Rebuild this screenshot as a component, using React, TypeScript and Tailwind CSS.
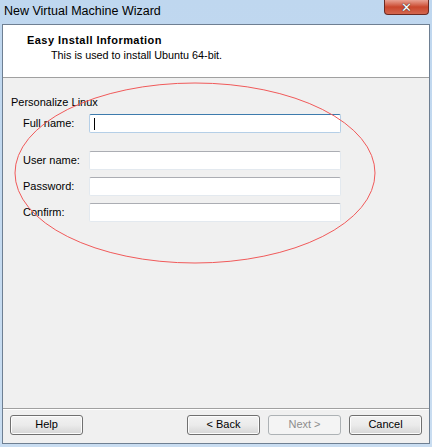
import React from 'react';

const font = { fontFamily: '"Liberation Sans", Arial, sans-serif' };

const Field: React.FC<{ label: string; focused?: boolean }> = ({ label, focused }) => (
    <div className="flex items-center h-[19px]">
        <span className="w-[66px] text-[11px] text-black">{label}</span>
        <div
            className={
                focused
                    ? 'relative w-[252px] h-[19px] bg-white rounded-[2px] border border-[#b5cfe7] border-t-[#3d7bad]'
                    : 'relative w-[252px] h-[19px] bg-white rounded-[2px] border border-[#e3e9ef] border-t-[#abadb3]'
            }
        >
            {focused && <span className="absolute left-[4px] top-[3px] w-px h-[12px] bg-black" />}
        </div>
    </div>
);

const Btn: React.FC<{ label: string; disabled?: boolean }> = ({ label, disabled }) => (
    <button
        className={
            disabled
                ? 'w-[73px] h-[20px] rounded-[3px] border border-[#adb2b5] bg-[#f4f4f4] text-[11px] text-[#8d8d8d]'
                : 'w-[73px] h-[20px] rounded-[3px] border border-[#707070] bg-gradient-to-b from-[#f2f2f2] via-[#ebebeb] to-[#d6d6d6] text-[11px] text-black shadow-[inset_0_0_0_1px_#fcfcfc]'
        }
        style={font}
    >
        {label}
    </button>
);

export default function App() {
    return (
        <div className="w-[432px] h-[447px] bg-gradient-to-b from-[#bfd7ef] to-[#c9ddf1] flex flex-col px-[2px] pb-[3px]" style={font}>
            {/* title bar */}
            <div className="h-[24px] flex items-start justify-between relative">
                <span className="pl-[2px] pt-[4px] text-[12.5px] text-black leading-[15px]">
                    New Virtual Machine Wizard
                </span>
                <div className="w-[45px] h-[15px] mr-[1px] rounded-b-[4px] border border-t-0 border-[#6b2a22] bg-gradient-to-b from-[#e8a193] via-[#c9462c] to-[#d3664e] flex items-center justify-center">
                    <span className="text-white font-bold text-[13px] leading-none" style={{ fontFamily: '"DejaVu Sans", sans-serif', textShadow: '0 0 1px #333, 0 0 1px #333' }}>✕</span>
                </div>
            </div>

            {/* client area */}
            <div className="flex-1 flex flex-col border border-[#6e7f92] bg-[#f0f0f0] relative">
                <div className="h-[53px] bg-white border-b border-[#a0a0a0] pl-[24px] pt-[8px]">
                    <div className="text-[11px] font-bold text-black leading-[14px] tracking-[0.45px]">Easy Install Information</div>
                    <div className="text-[10.8px] text-black leading-[14px] pl-[24px] pt-[1px]">This is used to install Ubuntu 64-bit.</div>
                </div>

                <div className="flex-1 pl-[8px] pt-[18px]">
                    <div className="text-[11px] text-black leading-[13px]">Personalize Linux</div>
                    <div className="pl-[12px] pt-[5px] flex flex-col">
                        <Field label="Full name:" focused />
                        <div className="h-[18px]" />
                        <div className="flex flex-col gap-[7px]">
                            <Field label="User name:" />
                            <Field label="Password:" />
                            <Field label="Confirm:" />
                        </div>
                    </div>
                </div>

                <div className="border-t border-[#a0a0a0] h-[35px] flex items-center justify-between px-[7px] pb-[3px] shadow-[inset_0_1px_0_#ffffff]">
                    <Btn label="Help" />
                    <div className="flex gap-[8px]">
                        <Btn label="< Back" />
                        <Btn label="Next >" disabled />
                        <Btn label="Cancel" />
                    </div>
                </div>

                <svg className="absolute left-0 top-0 pointer-events-none" width="426" height="419">
                    <ellipse cx="192" cy="148" rx="180" ry="90" fill="none" stroke="#f05a5a" strokeWidth="1" />
                </svg>
            </div>
        </div>
    );
}
